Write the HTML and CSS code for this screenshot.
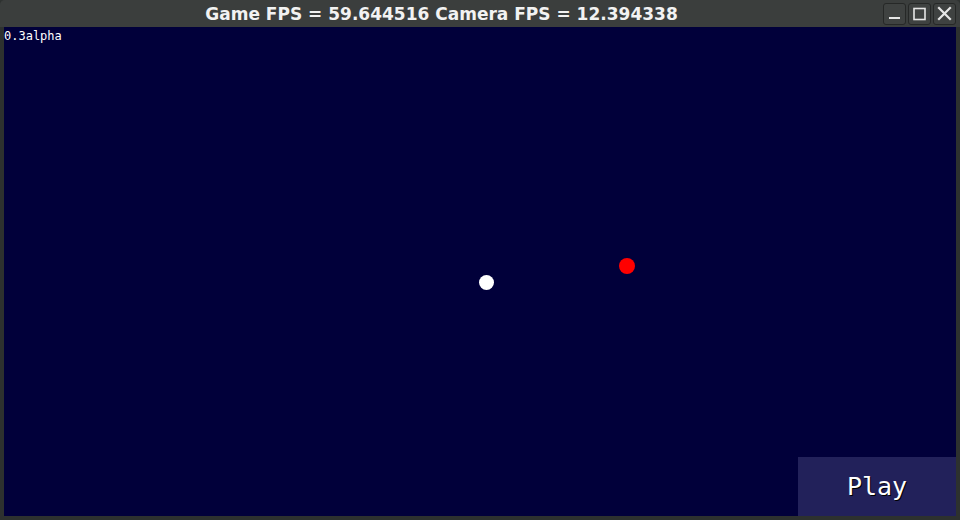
FILE: index.html
```html
<!DOCTYPE html>
<html>
<head>
<meta charset="utf-8">
<link rel="stylesheet" href="styles.css">
</head>
<body>
<div class="window">
  <div class="titlebar">
    <div class="title">Game FPS = 59.644516 Camera FPS = 12.394338</div>
    <div class="controls">
      <div class="ctl"><svg width="21" height="20" viewBox="0 0 21 20"><rect x="5" y="13" width="11" height="2" fill="#e6e6e6"/></svg></div>
      <div class="ctl"><svg width="21" height="20" viewBox="0 0 21 20"><rect x="5" y="4.5" width="11" height="11" fill="none" stroke="#e6e6e6" stroke-width="1.6"/></svg></div>
      <div class="ctl"><svg width="21" height="20" viewBox="0 0 21 20"><path d="M5 4 L16 15 M16 4 L5 15" stroke="#e6e6e6" stroke-width="2.2" stroke-linecap="square"/></svg></div>
    </div>
  </div>
  <div class="frame">
    <div class="canvas">
      <div class="version">0.3alpha</div>
      <div class="dot white"></div>
      <div class="dot red"></div>
      <div class="playbtn">Play</div>
    </div>
  </div>
</div>
</body>
</html>
```
FILE: styles.css
```css
html, body {
  margin: 0;
  padding: 0;
  background: #2f3331;
  width: 960px;
  height: 520px;
  overflow: hidden;
}
.window {
  width: 960px;
  height: 520px;
  display: flex;
  flex-direction: column;
  background: #363938;
  border-radius: 5px 5px 0 0;
}
.titlebar {
  height: 27px;
  display: flex;
  align-items: center;
  background: #3b3e3d;
  border-radius: 5px 5px 0 0;
  padding-right: 4px;
}
.title {
  flex: 1;
  text-align: center;
  font-family: "DejaVu Sans", sans-serif;
  font-weight: bold;
  font-size: 17px;
  color: #f2f2f2;
}
.controls {
  display: flex;
  gap: 2px;
  align-self: flex-start;
  margin-top: 3px;
}
.ctl {
  width: 21px;
  height: 20px;
  border: 1px solid #262827;
  border-radius: 3px;
  background: #3f4241;
}
.ctl svg { display: block; }
.frame {
  flex: 1;
  padding: 0 4px 4px 4px;
  background: #2d312f;
  display: flex;
}
.canvas {
  flex: 1;
  position: relative;
  background: #01003a;
  overflow: hidden;
}
.version {
  position: absolute;
  left: 0;
  top: 2px;
  font-family: "DejaVu Sans Mono", monospace;
  font-size: 12px;
  color: #ffffff;
  line-height: 14px;
}
.dot {
  position: absolute;
  border-radius: 50%;
}
.dot.white {
  width: 15px;
  height: 15px;
  background: #ffffff;
  left: 475px;
  top: 248px;
}
.dot.red {
  width: 16px;
  height: 16px;
  background: #ff0000;
  left: 615px;
  top: 231px;
}
.playbtn {
  position: absolute;
  right: 0;
  bottom: 0;
  width: 158px;
  height: 59px;
  background: #22215a;
  display: flex;
  align-items: center;
  justify-content: center;
  font-family: "DejaVu Sans Mono", monospace;
  font-size: 25px;
  color: #ffffff;
  text-shadow: 1px 1px 0 #000;
}
```
